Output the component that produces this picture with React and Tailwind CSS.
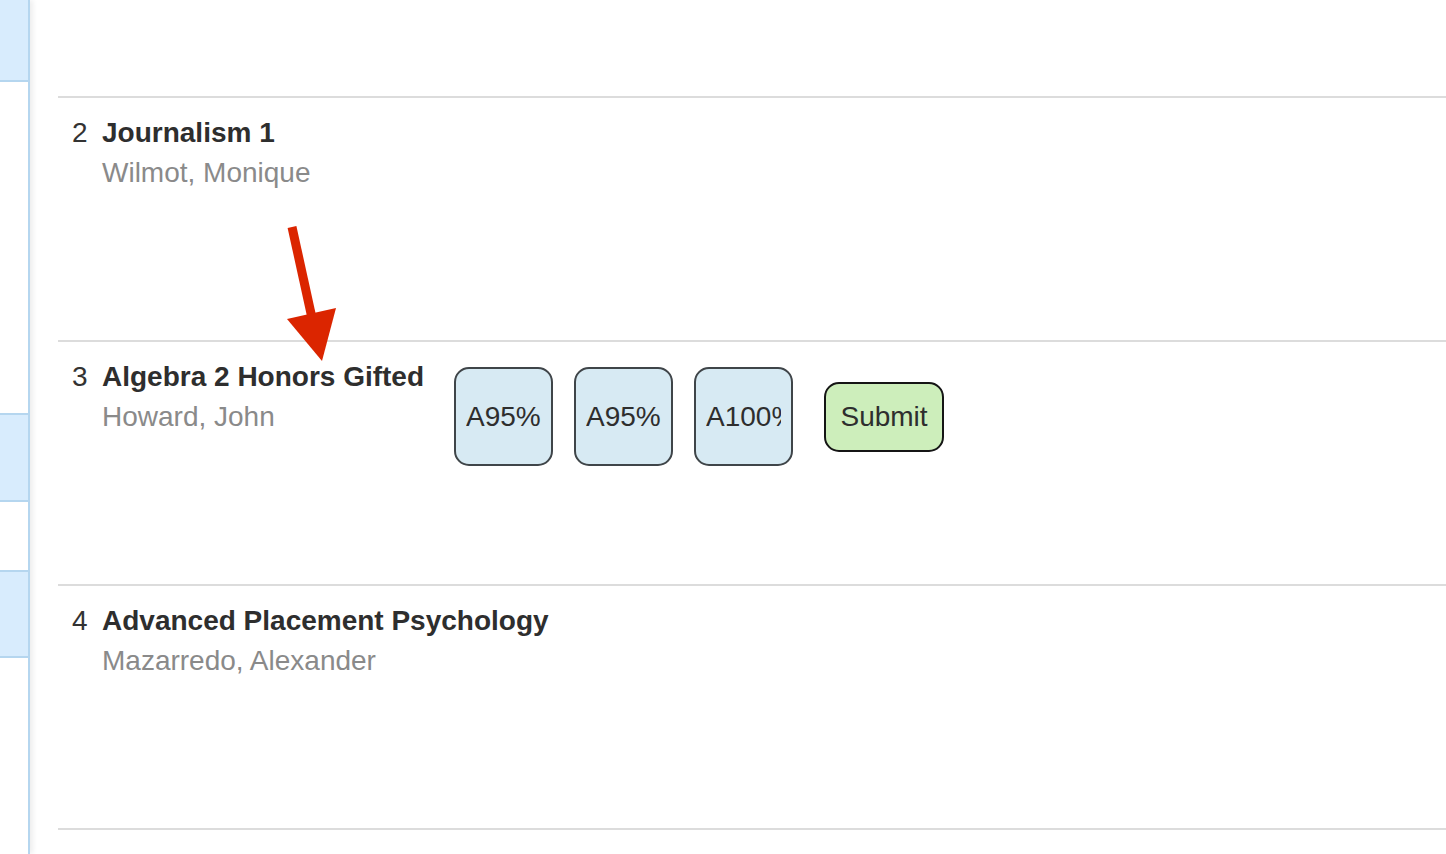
import React from 'react';

const rows = [
  { n: 2, title: 'Journalism 1', teacher: 'Wilmot, Monique' },
  { n: 3, title: 'Algebra 2 Honors Gifted', teacher: 'Howard, John', grades: ['A95%', 'A95%', 'A100%'] },
  { n: 4, title: 'Advanced Placement Psychology', teacher: 'Mazarredo, Alexander' },
  { n: 5, title: 'English Honors 1 Gifted', teacher: 'Smith, Anna' },
];

const Sidebar = () => (
  <div className="w-[30px] shrink-0 border-r-2 border-[#b5d6ef] bg-white shadow-[3px_0_5px_rgba(0,0,0,0.07)] flex flex-col">
    <div className="h-[82px] bg-[#d8ecfd] border-b-2 border-[#b5d6ef]" />
    <div className="h-[331px]" />
    <div className="h-[89px] bg-[#d8ecfd] border-y-2 border-[#b5d6ef]" />
    <div className="h-[68px]" />
    <div className="h-[88px] bg-[#d8ecfd] border-y-2 border-[#b5d6ef]" />
  </div>
);

const GradeBox = ({ value }) => (
  <div className="w-[99px] h-[99px] rounded-[15px] border-2 border-[#3f4549] bg-[#d7eaf3] px-[10px] flex items-center">
    <div className="overflow-hidden whitespace-nowrap text-[28px] text-[#2e2e2e]">{value}</div>
  </div>
);

const Row = ({ row }) => (
  <div className="h-[244px] border-t-2 border-[#dcdcdc] pl-[14px] pt-[15px] flex items-start">
    <span className="w-[30px] shrink-0 text-[28px] leading-[40px] text-[#333]">{row.n}</span>
    <div className="shrink-0">
      <div className="text-[28px] leading-[40px] font-bold text-[#2e2e2e]">{row.title}</div>
      <div className="text-[28px] leading-[40px] text-[#8a8a8a]">{row.teacher}</div>
    </div>
    {row.grades && (
      <div className="ml-[30px] mt-[10px] flex items-center">
        <div className="flex gap-[21px]">
          {row.grades.map((g, i) => (
            <GradeBox key={i} value={g} />
          ))}
        </div>
        <button className="ml-[31px] w-[120px] h-[70px] rounded-[15px] border-2 border-[#151515] bg-[#cdeebb] text-[28px] text-[#2e2e2e]">
          Submit
        </button>
      </div>
    )}
  </div>
);

export default function App() {
  return (
    <div
      className="relative w-[1446px] h-[854px] overflow-hidden bg-white flex"
      style={{ fontFamily: '"Liberation Sans", Arial, Helvetica, sans-serif' }}
    >
      <Sidebar />
      <div className="flex-1 pl-[28px] pt-[96px]">
        {rows.map((r) => (
          <Row key={r.n} row={r} />
        ))}
      </div>
      <svg className="absolute left-0 top-0 pointer-events-none" width="1446" height="854">
        <line x1="292" y1="227" x2="312" y2="318" stroke="#db2500" strokeWidth="9" />
        <polygon points="287,319 336,308 322,361" fill="#db2500" />
      </svg>
    </div>
  );
}
